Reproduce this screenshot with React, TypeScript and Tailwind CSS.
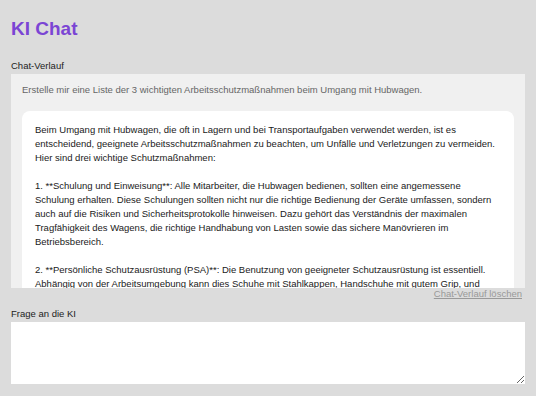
import React from 'react';

const answer = [
  'Beim Umgang mit Hubwagen, die oft in Lagern und bei Transportaufgaben verwendet werden, ist es entscheidend, geeignete Arbeitsschutzmaßnahmen zu beachten, um Unfälle und Verletzungen zu vermeiden. Hier sind drei wichtige Schutzmaßnahmen:',
  '1. **Schulung und Einweisung**: Alle Mitarbeiter, die Hubwagen bedienen, sollten eine angemessene Schulung erhalten. Diese Schulungen sollten nicht nur die richtige Bedienung der Geräte umfassen, sondern auch auf die Risiken und Sicherheitsprotokolle hinweisen. Dazu gehört das Verständnis der maximalen Tragfähigkeit des Wagens, die richtige Handhabung von Lasten sowie das sichere Manövrieren im Betriebsbereich.',
  '2. **Persönliche Schutzausrüstung (PSA)**: Die Benutzung von geeigneter Schutzausrüstung ist essentiell. Abhängig von der Arbeitsumgebung kann dies Schuhe mit Stahlkappen, Handschuhe mit gutem Grip, und gegebenenfalls Warnwesten umfassen, um die Sichtbarkeit zu erhöhen.',
  '3. **Regelmäßige Wartung und Inspektion**: Hubwagen sollten regelmäßig überprüft und gewartet werden.',
];

export default function App() {
  return (
    <div
      className="h-[396px] w-full bg-[#dcdcdc] px-[11px] pt-[17px] text-[#222]"
      style={{ fontFamily: '"Liberation Sans", Arial, sans-serif' }}
    >
      <h1 className="text-[19px] leading-[23px] font-bold text-[#7b45d4]">KI Chat</h1>

      <div className="mt-[19px] text-[9.5px] leading-[14px]">Chat-Verlauf</div>
      <div className="mt-px h-[214px] overflow-hidden bg-[#f0f0f0] px-[11px] pt-[9px]">
        <p className="text-[9.5px] leading-[14px] text-[#666]">
          Erstelle mir eine Liste der 3 wichtigten Arbeitsschutzmaßnahmen beim Umgang mit Hubwagen.
        </p>
        <div className="mt-[14px] rounded-[8px] bg-white px-[13px] py-[12px] text-[9.5px] leading-[14px] text-[#1a1a1a]">
          {answer.map((para, i) => (
            <p key={i} className={i > 0 ? 'mt-[14px]' : ''}>
              {para}
            </p>
          ))}
        </div>
      </div>

      <div className="flex justify-end pr-[3px]">
        <button className="text-[9.5px] leading-[12px] text-[#999] underline">Chat-Verlauf löschen</button>
      </div>

      <div className="mt-[7px] text-[9.5px] leading-[14px]">Frage an die KI</div>
      <textarea className="mt-px block h-[62px] w-full resize-y bg-white outline-none" />
    </div>
  );
}
